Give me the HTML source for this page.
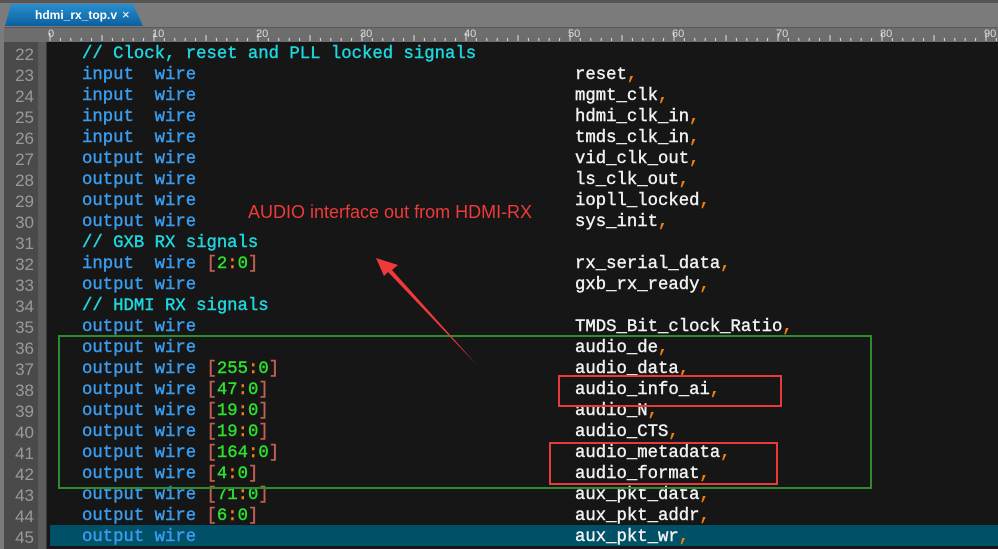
<!DOCTYPE html>
<html><head><meta charset="utf-8"><style>
body{margin:0;width:998px;height:549px;overflow:hidden;background:#7b7b7b;position:relative;font-family:"Liberation Mono",monospace}
.top{position:absolute;left:0;top:0;width:998px;height:3px;background:#555}
.tab{position:absolute;left:5px;top:4px;width:138px;height:22px;background:linear-gradient(#2a8fd0,#0b5f9e);clip-path:polygon(6px 0,128px 0,138px 22px,0 22px);color:#fff;font:bold 12px "Liberation Sans",sans-serif;line-height:22px}
.tab span{position:absolute;left:30px;top:0;white-space:nowrap}.tab i{position:absolute;left:117px;top:0;font-style:normal;font-weight:normal;font-size:13px}
.ruler{position:absolute;left:4px;top:27px;width:994px;height:14px;background:#6d6d6d;border-bottom:1px solid #ccc;border-top:1px solid #5a5a5a}
.rl{position:absolute;top:0px;font:11px "Liberation Sans",sans-serif;color:#ddd}
.gut{position:absolute;left:4px;top:42px;width:34px;height:507px;background:#4a4a4a}
.strip{position:absolute;left:38px;top:42px;width:8px;height:507px;background:#5c5c5c;border-right:2px solid #3a3a3a}
.code{position:absolute;left:47px;top:42px;width:951px;height:507px;background:#161616}
.ln{position:absolute;left:4px;width:30px;text-align:right;color:#9a9a9a;font:17px "Liberation Sans",sans-serif;height:21px;line-height:21px}
.l{position:absolute;left:82px;height:21px;line-height:21px;font-size:17.3px;white-space:pre;color:#ddd;-webkit-text-stroke:0.4px}
.n{position:absolute;left:575px;height:21px;line-height:21px;font-size:17.3px;white-space:pre;color:#f2f2f2;-webkit-text-stroke:0.4px}
.k{color:#3a9df0}.c{color:#1ed8e0}.g{color:#2de02d}.b{color:#c06050}.o{color:#f08010}
.hl{position:absolute;left:50px;top:525px;width:948px;height:21px;background:#005068}
.box{position:absolute;box-sizing:border-box}
</style></head><body>
<div class="top"></div>
<div class="tab"><span>hdmi_rx_top.v</span><i>×</i></div>
<div class="ruler">
<svg width="994" height="14" style="position:absolute;left:0;top:0"><g stroke="#ddd" stroke-width="1">
</g></svg>
<span class="rl" style="left:44px">0</span><span class="rl" style="left:148px">10</span><span class="rl" style="left:252px">20</span><span class="rl" style="left:356px">30</span><span class="rl" style="left:460px">40</span><span class="rl" style="left:564px">50</span><span class="rl" style="left:668px">60</span><span class="rl" style="left:772px">70</span><span class="rl" style="left:876px">80</span><span class="rl" style="left:980px">90</span>
</div>
<div class="gut"></div><div class="strip"></div><div class="code"></div>
<div class="hl"></div>
<div id="lines"></div>
<div class="box" style="left:58px;top:335px;width:814px;height:154px;border:2px solid #2e8b2e"></div>
<div class="box" style="left:558px;top:375px;width:224px;height:32px;border:2px solid #e83a3a"></div>
<div class="box" style="left:549px;top:442px;width:229px;height:43px;border:2px solid #e83a3a"></div>
<div style="position:absolute;left:248px;top:202px;color:#f03a3a;font:18px 'Liberation Sans',sans-serif">AUDIO interface out from HDMI-RX</div>
<svg width="998" height="549" style="position:absolute;left:0;top:0"><polygon points="376,258 398,265 392,270 477,365 388,272 384,276" fill="#f03a3a"/></svg>
<script>
const L=[
['<span class="c">// Clock, reset and PLL locked signals</span>',''],
['<span class="k">input  wire</span>','reset'],
['<span class="k">input  wire</span>','mgmt_clk'],
['<span class="k">input  wire</span>','hdmi_clk_in'],
['<span class="k">input  wire</span>','tmds_clk_in'],
['<span class="k">output wire</span>','vid_clk_out'],
['<span class="k">output wire</span>','ls_clk_out'],
['<span class="k">output wire</span>','iopll_locked'],
['<span class="k">output wire</span>','sys_init'],
['<span class="c">// GXB RX signals</span>',''],
['<span class="k">input  wire</span> <span class="b">[</span><span class="g">2</span><span class="o">:</span><span class="g">0</span><span class="b">]</span>','rx_serial_data'],
['<span class="k">output wire</span>','gxb_rx_ready'],
['<span class="c">// HDMI RX signals</span>',''],
['<span class="k">output wire</span>','TMDS_Bit_clock_Ratio'],
['<span class="k">output wire</span>','audio_de'],
['B255','audio_data'],['B47','audio_info_ai'],['B19','audio_N'],['B19','audio_CTS'],['B164','audio_metadata'],['B4','audio_format'],['B71','aux_pkt_data'],['B6','aux_pkt_addr'],
['<span class="k">output wire</span>','aux_pkt_wr']];
let h='';L.forEach((x,i)=>{let t=44+i*21;let a=x[0];if(a[0]=='B'){a='<span class="k">output wire</span> <span class="b">[</span><span class="g">'+a.slice(1)+'</span><span class="o">:</span><span class="g">0</span><span class="b">]</span>';}
h+='<div class="ln" style="top:'+t+'px">'+(22+i)+'</div><div class="l" style="top:'+t+'px">'+a+'</div>';
if(x[1])h+='<div class="n" style="top:'+t+'px">'+x[1]+'<span class="o">,</span></div>';});
document.getElementById('lines').innerHTML=h;
let s='';for(let c=0;c<=91;c++){let x=50+c*10.4-4;let hh=c%10==0?8:(c%5==0?6:3);s+='<line x1="'+x+'" x2="'+x+'" y1="'+(13-hh)+'" y2="13"/>';}
document.querySelector('.ruler g').innerHTML=s;
</script>
</body></html>
